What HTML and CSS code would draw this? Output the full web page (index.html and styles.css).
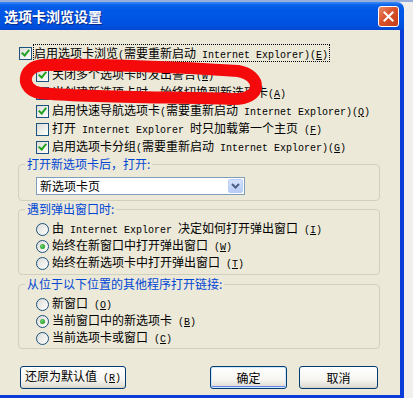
FILE: index.html
```html
<!DOCTYPE html>
<html>
<head>
<meta charset="utf-8">
<link rel="stylesheet" href="styles.css">
</head>
<body>
<div class="window">
  <div class="titlebar">
    <span class="title">选项卡浏览设置</span>
    <span class="close">
      <svg width="21" height="21" viewBox="0 0 21 21"><path d="M6 6 L15 15 M15 6 L6 15" stroke="#fff" stroke-width="2.2" stroke-linecap="square"/></svg>
    </span>
  </div>
  <div class="client">
    <div class="row main"><span class="cb on"></span><span class="label focus">启用选项卡浏览<span class="en">(</span>需要重新启动<span class="en"> Internet Explorer)(<u>E</u>)</span></span></div>
    <div class="row sub first"><span class="cb on"></span><span class="label">关闭多个选项卡时发出警告<span class="en">(<u>W</u>)</span></span></div>
    <div class="row sub"><span class="cb"></span><span class="label">当创建新选项卡时，始终切换到新选项卡<span class="en">(<u>A</u>)</span></span></div>
    <div class="row sub"><span class="cb on"></span><span class="label">启用快速导航选项卡<span class="en">(</span>需要重新启动<span class="en"> Internet Explorer)(<u>Q</u>)</span></span></div>
    <div class="row sub"><span class="cb"></span><span class="label">打开<span class="en"> Internet Explorer </span>时只加载第一个主页<span class="en"> (<u>F</u>)</span></span></div>
    <div class="row sub"><span class="cb on"></span><span class="label">启用选项卡分组<span class="en">(</span>需要重新启动<span class="en"> Internet Explorer)(<u>G</u>)</span></span></div>

    <fieldset class="group g1">
      <legend>打开新选项卡后，打开:</legend>
      <div class="combo">
        <span class="combo-text">新选项卡页</span>
        <span class="combo-btn"><svg width="9" height="6" viewBox="0 0 9 6"><path d="M1 1 L4.5 4.5 L8 1" fill="none" stroke="#4d6185" stroke-width="2"/></svg></span>
      </div>
    </fieldset>

    <fieldset class="group g2">
      <legend>遇到弹出窗口时:</legend>
      <div class="radio"><span class="rb"></span><span class="label">由<span class="en"> Internet Explorer </span>决定如何打开弹出窗口<span class="en"> (<u>I</u>)</span></span></div>
      <div class="radio"><span class="rb on"></span><span class="label">始终在新窗口中打开弹出窗口<span class="en"> (<u>W</u>)</span></span></div>
      <div class="radio"><span class="rb"></span><span class="label">始终在新选项卡中打开弹出窗口<span class="en"> (<u>T</u>)</span></span></div>
    </fieldset>

    <fieldset class="group g3">
      <legend>从位于以下位置的其他程序打开链接:</legend>
      <div class="radio"><span class="rb"></span><span class="label">新窗口<span class="en"> (<u>O</u>)</span></span></div>
      <div class="radio"><span class="rb on"></span><span class="label">当前窗口中的新选项卡<span class="en"> (<u>B</u>)</span></span></div>
      <div class="radio"><span class="rb"></span><span class="label">当前选项卡或窗口<span class="en"> (<u>C</u>)</span></span></div>
    </fieldset>

    <div class="buttons">
      <button class="btn restore">还原为默认值<span class="en"> (<u>R</u>)</span></button>
      <button class="btn ok">确定</button>
      <button class="btn cancel">取消</button>
    </div>
  </div>
  <svg class="scribble" width="404" height="398" viewBox="0 0 404 398">
    <path d="M238 69 C180 65 95 62 44 63 C21 64 20 88 40 91 C90 96 185 95 232 97 C264 98 262 73 238 69" fill="none" stroke="#f40a0a" stroke-width="12" stroke-linecap="round"/>
  </svg>
</div>
</body>
</html>
```

FILE: styles.css
```css
body {
  margin: 0;
  background: linear-gradient(#9aaedb 0, #9aaedb 2px, #f1f0ec 2px);
  font-family: "Noto Sans CJK SC", sans-serif;
  font-size: 12px;
  color: #000;
}
.window {
  position: relative;
  width: 404px;
  margin-top: 2px;
}
.titlebar {
  height: 28px;
  display: flex;
  align-items: center;
  justify-content: space-between;
  padding-left: 4px;
  border-top-right-radius: 7px;
  background: linear-gradient(#3c8cf8 0, #0a62ea 3px, #0058e6 8px, #0055e4 60%, #004fdc 90%, #0047cf 100%);
}
.title {
  color: #fff;
  font-weight: bold;
  font-size: 14px;
  line-height: 16px;
  text-shadow: 1px 1px 0 #0b2a8a;
}
.close {
  width: 19px;
  height: 19px;
  margin-right: 5px;
  margin-top: 1px;
  border: 1px solid #fff;
  border-radius: 3px;
  background: linear-gradient(135deg, #e98a6a 0, #d9522b 45%, #c33c18 100%);
  display: flex;
  align-items: center;
  justify-content: center;
}
.close svg {
  width: 19px;
  height: 19px;
}
.client {
  width: 400px;
  height: 351px;
  padding-top: 14px;
  background: #ece9d8;
  border-right: 4px solid #0a3cd8;
  border-bottom: 3px solid #0a3cd8;
}
.en {
  font-family: "Liberation Mono", monospace;
  font-size: 10px;
  white-space: pre;
}
.row {
  display: flex;
  align-items: center;
  height: 18px;
  line-height: 14px;
  white-space: nowrap;
}
.row.main {
  margin-left: 19px;
  margin-bottom: 4px;
}
.row.main .label {
  margin-left: 1px;
}
.row.sub {
  margin-left: 36px;
}
.row.sub .label {
  margin-left: 3px;
}
.focus {
  border: 1px dotted #000;
  height: 16px;
  line-height: 16px;
  padding-right: 1px;
}
.cb {
  position: relative;
  flex: none;
  width: 11px;
  height: 11px;
  border: 1px solid #1c5180;
  background: linear-gradient(135deg, #dcdcd7 0, #f4f4f1 70%, #fff 100%);
}
.cb.on::after {
  content: "";
  position: absolute;
  left: 3px;
  top: 0px;
  width: 3px;
  height: 6px;
  border: solid #21a121;
  border-width: 0 2px 2px 0;
  transform: rotate(40deg);
}
.group {
  margin: 1px 20px 0 18px;
  padding: 6px 6px 5px 6px;
  border: 1px solid #d0d0bf;
  border-radius: 4px;
}
.group legend {
  padding: 0 2px;
  color: #0046d5;
  line-height: 14px;
}
.g2 {
  padding-top: 5px;
  padding-bottom: 2px;
}
.g3 {
  margin-top: 2px;
  padding-top: 5px;
  padding-bottom: 1px;
}
.combo {
  display: flex;
  align-items: center;
  margin-left: 11px;
  width: 207px;
  height: 16px;
  border: 1px solid #7f9db9;
  background: #fff;
}
.combo-text {
  flex: 1;
  padding-left: 3px;
  line-height: 14px;
}
.combo-btn {
  width: 15px;
  height: 14px;
  margin-right: 1px;
  border-radius: 2px;
  border: 1px solid #b9cdf6;
  box-sizing: border-box;
  background: linear-gradient(#d6e3fd, #b7cbf6);
  display: flex;
  align-items: center;
  justify-content: center;
}
.radio {
  display: flex;
  align-items: center;
  height: 17px;
  margin-left: 11px;
  line-height: 14px;
  white-space: nowrap;
}
.radio .label {
  margin-left: 3px;
}
.rb {
  position: relative;
  flex: none;
  width: 11px;
  height: 11px;
  border: 1px solid #1c5180;
  border-radius: 50%;
  background: linear-gradient(135deg, #dcdcd7 0, #f4f4f1 70%, #fff 100%);
}
.rb.on::after {
  content: "";
  position: absolute;
  left: 3px;
  top: 3px;
  width: 5px;
  height: 5px;
  border-radius: 50%;
  background: radial-gradient(circle at 40% 40%, #7ad17a, #21a121 70%);
}
.buttons {
  display: flex;
  margin-top: 17px;
  padding-left: 20px;
  padding-right: 22px;
}
.btn {
  height: 23px;
  border: 1px solid #003c74;
  border-radius: 3px;
  background: linear-gradient(#ffffff 0, #f6f5f0 60%, #e3e1d6 90%, #d6d0c5 100%);
  font-family: "Noto Sans CJK SC", sans-serif;
  font-size: 12px;
  line-height: 14px;
  color: #000;
  padding: 0;
}
.restore {
  width: 106px;
}
.ok {
  width: 77px;
  margin-left: auto;
  box-shadow: inset 0 0 0 1px #cee7ff, inset 0 -1px 0 1px #6982ee;
}
.cancel {
  width: 79px;
  margin-left: 12px;
}
.scribble {
  position: absolute;
  left: 0;
  top: 0;
  pointer-events: none;
}
```
